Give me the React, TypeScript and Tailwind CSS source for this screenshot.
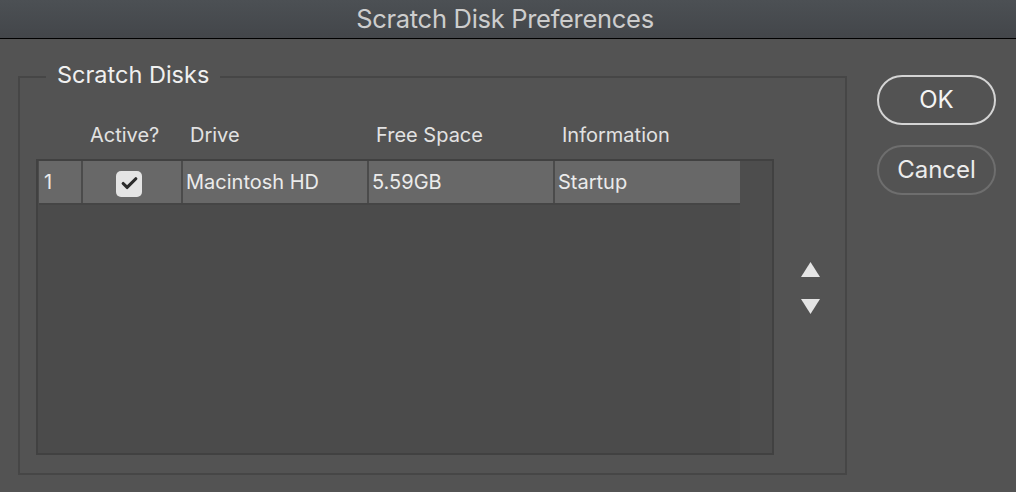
import { Check } from 'lucide-react'

const cols = [
  { w: 'w-[42px]', label: '' },
  { w: 'w-[98px]', label: 'Active?' },
  { w: 'w-[184px]', label: 'Drive' },
  { w: 'w-[184px]', label: 'Free Space' },
  { w: 'w-[185px]', label: 'Information' },
]

function Triangle({ up }: { up?: boolean }) {
  return (
    <svg width="19" height="15" viewBox="0 0 19 15">
      <polygon points={up ? '9.5,0 19,15 0,15' : '0,0 19,0 9.5,15'} fill="#e4e4e4" />
    </svg>
  )
}

export default function App() {
  return (
    <div
      className="w-[1016px] h-[492px] bg-[#535353] flex flex-col overflow-hidden"
      style={{ fontFamily: 'Inter, "Liberation Sans", sans-serif' }}
    >
      {/* title bar */}
      <div className="h-[39px] shrink-0 flex items-center justify-center border-b border-black bg-gradient-to-b from-[#4c5054] to-[#43464a] pr-[6px]">
        <span className="text-[25.5px] text-[#cdcdcd] tracking-[-0.3px]">Scratch Disk Preferences</span>
      </div>

      <div className="flex pt-[37px] pl-[18px]">
        {/* group box */}
        <div className="w-[829px] h-[399px] border-2 border-[#464646] flex flex-col">
          <div className="-mt-[17px] ml-[26px] self-start px-[11px] bg-[#535353] text-[23.5px] leading-[28px] text-[#f0f0f0]">
            Scratch Disks
          </div>

          <div className="flex mt-[32px] pl-[16px]">
            <div className="flex flex-col w-[738px]">
              {/* header */}
              <div className="flex h-[28px] items-center pl-[3px] text-[20px] text-[#e2e2e2]">
                {cols.map((c, i) => (
                  <div key={i} className={`${c.w} shrink-0 mr-[2px] pl-[7px]`}>
                    {c.label}
                  </div>
                ))}
              </div>

              {/* table */}
              <div className="mt-[10px] h-[296px] border-2 border-[#414141] bg-[#4b4b4b] flex">
                <div className="flex flex-col w-[702px] pl-px">
                  <div className="flex h-[44px] border-b-2 border-[#454545] text-[20px] text-[#ebebeb]">
                    <div className="w-[42px] bg-[#686868] mr-[2px] flex items-center pl-[5px]">1</div>
                    <div className="w-[98px] bg-[#686868] mr-[2px] flex items-center justify-center pr-[6px] pt-[3px]">
                      <div className="w-[26px] h-[26px] rounded-[5px] bg-[#e4e4e4] flex items-center justify-center">
                        <Check size={19} strokeWidth={4} color="#2b2b2b" />
                      </div>
                    </div>
                    <div className="w-[184px] bg-[#686868] mr-[2px] flex items-center pl-[3px]">Macintosh HD</div>
                    <div className="w-[184px] bg-[#686868] mr-[2px] flex items-center pl-[3px]">5.59GB</div>
                    <div className="w-[185px] bg-[#686868] flex items-center pl-[3px]">Startup</div>
                  </div>
                </div>
                <div className="flex-1 bg-[#4d4d4d]" />
              </div>
            </div>

            {/* reorder arrows */}
            <div className="flex-1 flex flex-col items-center gap-[22px] pt-[141px] pl-[2px]">
              <Triangle up />
              <Triangle />
            </div>
          </div>
        </div>

        {/* buttons */}
        <div className="ml-[30px] -mt-px flex flex-col gap-[20px]">
          <button className="w-[119px] h-[50px] rounded-full border-2 border-[#d4d4d4] text-[24px] text-[#f4f4f4]">
            OK
          </button>
          <button className="w-[119px] h-[50px] rounded-full border-2 border-[#6e6e6e] text-[24px] text-[#ececec]">
            Cancel
          </button>
        </div>
      </div>
    </div>
  )
}
